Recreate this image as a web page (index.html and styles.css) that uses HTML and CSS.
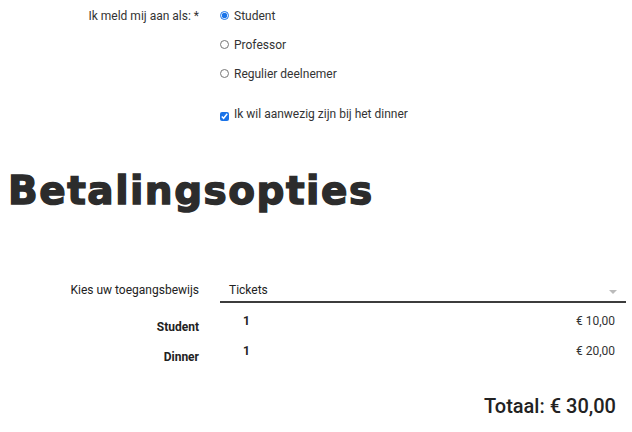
FILE: index.html
```html
<!DOCTYPE html>
<html lang="nl">
<head>
    <meta charset="UTF-8">
    <title>Inschrijving</title>
    <link rel="stylesheet" href="styles.css">
</head>
<body>
    <!-- Registratie -->
    <div class="form-row">
        <div class="form-label">Ik meld mij aan als: *</div>
        <div class="form-field">
            <label class="option"><input type="radio" name="rol" checked> Student</label>
            <label class="option"><input type="radio" name="rol"> Professor</label>
            <label class="option"><input type="radio" name="rol"> Regulier deelnemer</label>
            <label class="option dinner"><input type="checkbox" checked> Ik wil aanwezig zijn bij het dinner</label>
        </div>
    </div>

    <h1 class="page-title">Betalingsopties</h1>

    <div class="form-row select-row">
        <div class="form-label">Kies uw toegangsbewijs</div>
        <div class="form-field select-box">
            <span>Tickets</span>
            <span class="arrow"></span>
        </div>
    </div>

    <div class="form-row item-row">
        <div class="form-label bold">Student</div>
        <div class="form-field item">
            <span class="qty">1</span>
            <span class="price">€ 10,00</span>
        </div>
    </div>
    <div class="form-row item-row">
        <div class="form-label bold">Dinner</div>
        <div class="form-field item">
            <span class="qty">1</span>
            <span class="price">€ 20,00</span>
        </div>
    </div>

    <div class="total">Totaal: € 30,00</div>
</body>
</html>
```

FILE: styles.css
```css
* {
    margin: 0;
    padding: 0;
    box-sizing: border-box;
}

body {
    font-family: Roboto, "Noto Sans", sans-serif;
    font-size: 12px;
    color: #222;
    background-color: #fff;
    padding: 0 0 0 8px;
    width: 632px;
}

.form-row {
    display: flex;
}

.form-label {
    width: 191px;
    text-align: right;
    color: #333;
    padding-top: 9px;
}

.form-label.bold {
    font-weight: bold;
    color: #222;
}

.form-field {
    margin-left: 21px;
    width: 406px;
}

.option {
    display: flex;
    align-items: center;
    height: 29px;
    margin-top: 1px;
    margin-bottom: -1px;
    color: #333;
    font-size: 12px;
}

.option input {
    width: 9px;
    height: 9px;
    margin: 0 5px 0 0;
    accent-color: #1a73e8;
}

.option.dinner {
    margin-top: 17px;
    height: 20px;
}

.option.dinner input {
    margin-top: 5px;
}

.page-title {
    font-family: "DejaVu Sans", sans-serif;
    font-weight: bold;
    font-size: 39px;
    color: #2c2c2c;
    letter-spacing: 1.5px;
    -webkit-text-stroke: 1.4px #2c2c2c;
    margin: 42px 0 0 0;
    line-height: 52px;
}

.select-row {
    margin-top: 54px;
}

.select-row .form-label {
    padding-top: 12px;
    color: #222;
}

.select-box {
    display: flex;
    justify-content: space-between;
    align-items: center;
    border-bottom: 2px solid #3c3c3c;
    height: 32px;
    padding: 8px 9px 0 9px;
    color: #222;
}

.arrow {
    width: 0;
    height: 0;
    border-left: 4px solid transparent;
    border-right: 4px solid transparent;
    border-top: 4px solid #bbb;
    margin-top: 4px;
}

.item-row {
    height: 30px;
}

.item {
    display: flex;
    justify-content: space-between;
    padding: 11px 11px 0 23px;
}

.item-row .form-label {
    padding-top: 17px;
}

.qty {
    font-weight: bold;
}

.price {
    color: #333;
}

.total {
    text-align: right;
    width: 608px;
    font-size: 20px;
    font-weight: 500;
    color: #222;
    margin-top: 31px;
}
```
